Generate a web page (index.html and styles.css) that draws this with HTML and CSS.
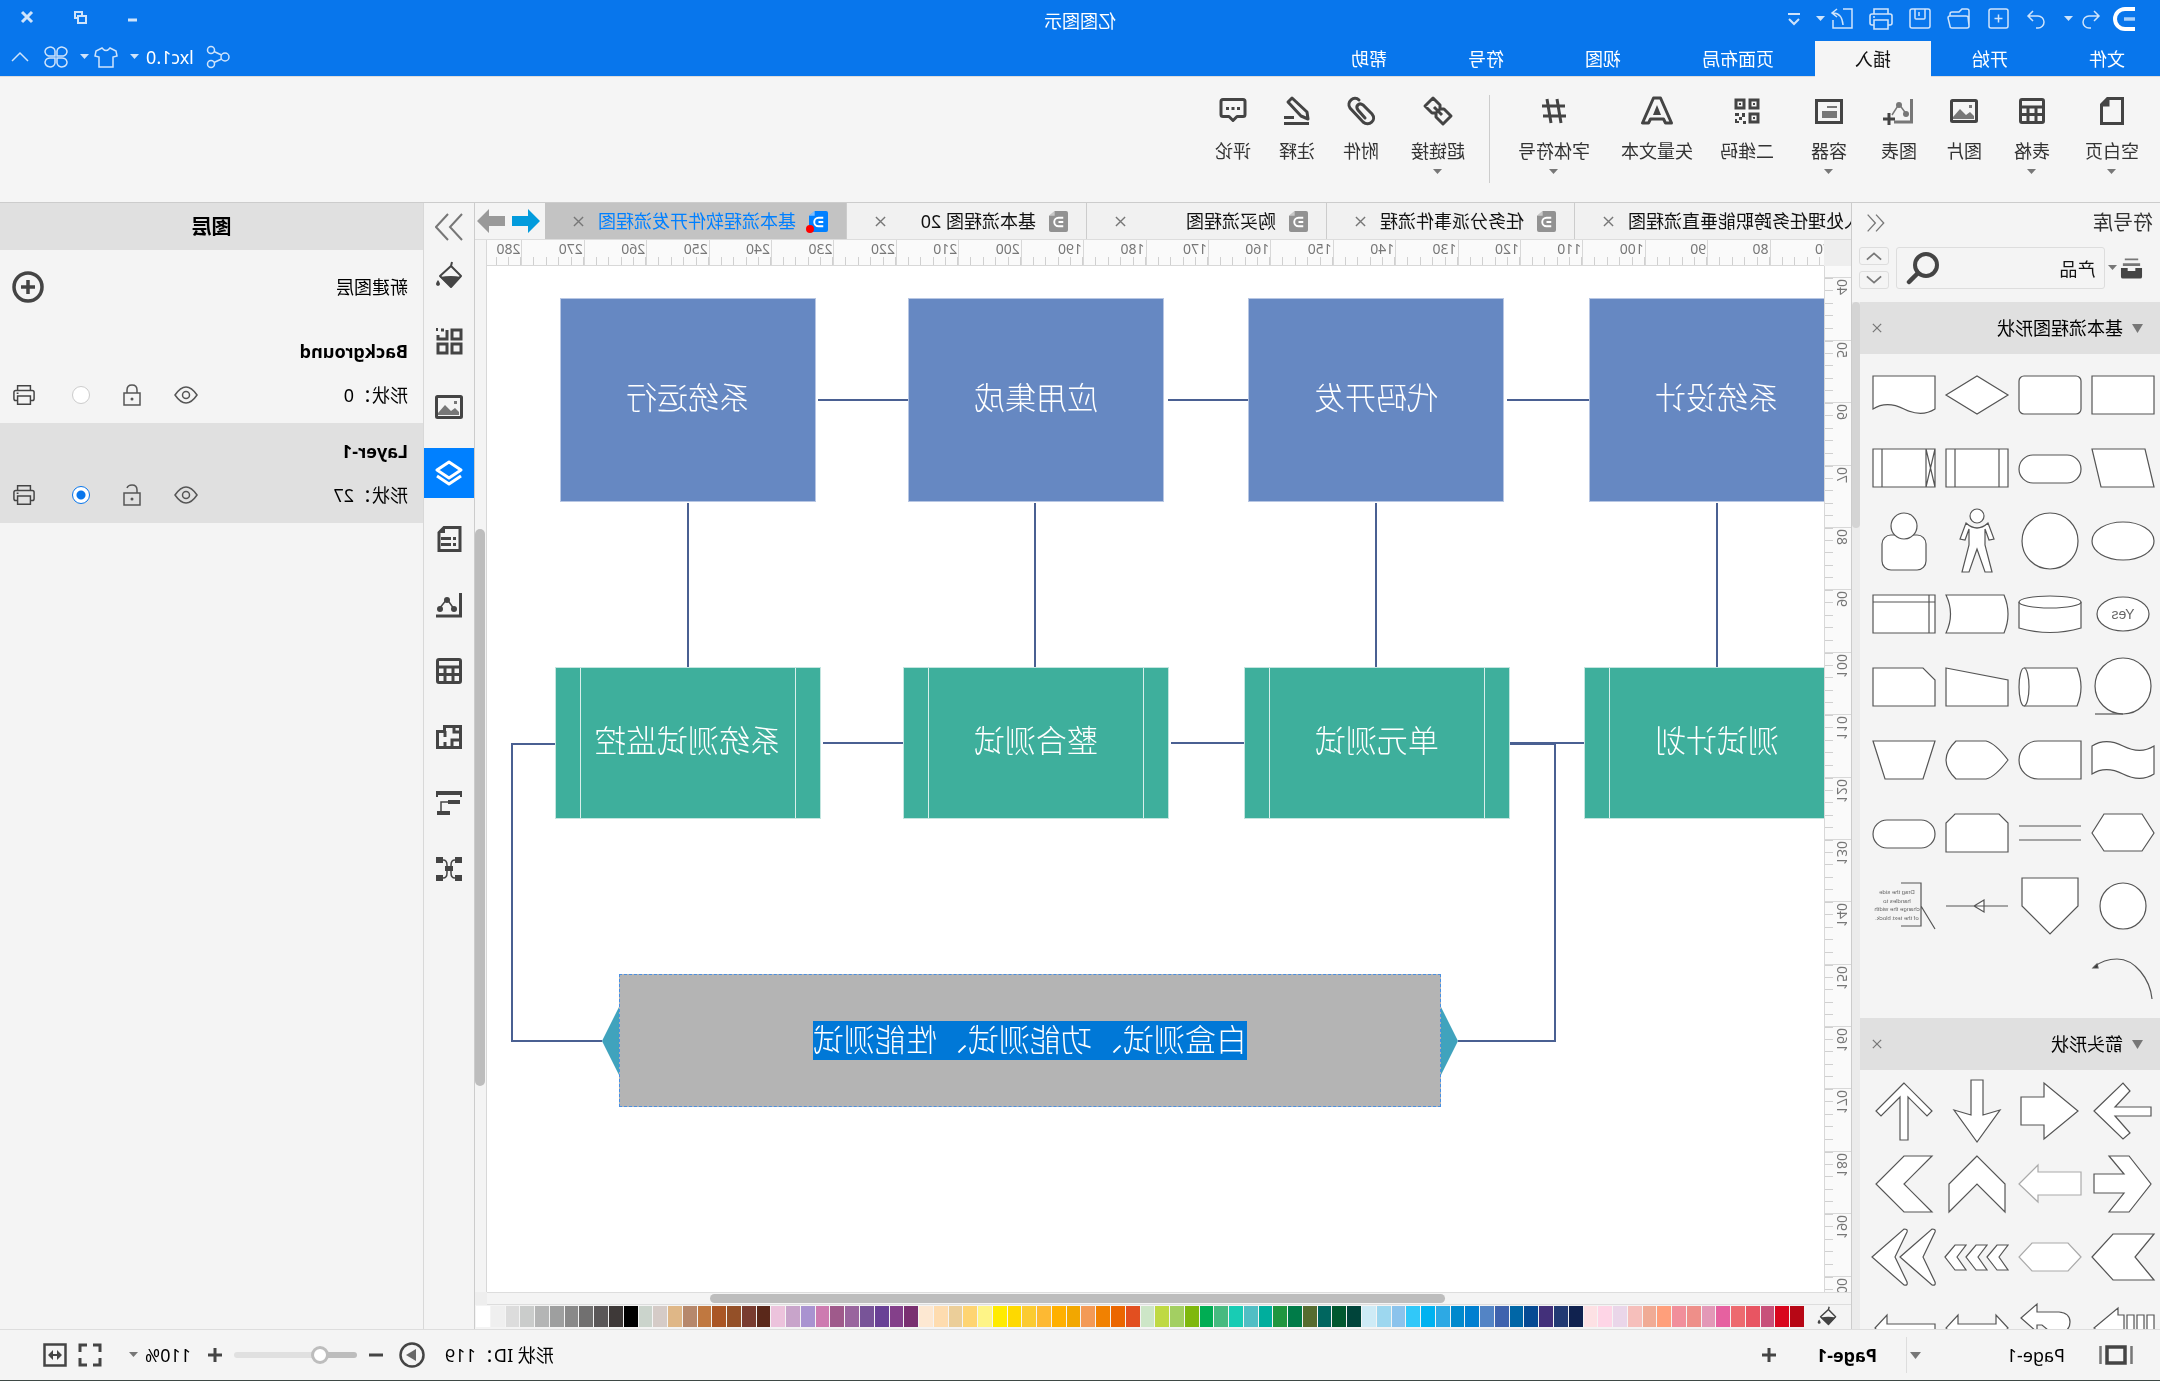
FILE: index.html
```html
<!DOCTYPE html>
<html lang="zh-CN">
<head>
<meta charset="utf-8">
<title>亿图图示</title>
<link rel="stylesheet" href="styles.css">
</head>
<body>
<svg class="sprite" aria-hidden="true">
  <symbol id="i-bucket" viewBox="0 0 28 28"><path d="M11 1l1 4M12 5l11 10-11 11L2 15z" fill="none" stroke="currentColor" stroke-width="2" stroke-linejoin="round"/><path d="M2 16q10-2 21 0L12 26z" fill="currentColor"/><path d="M25 19q4 5 0 6-4-1 0-6z" fill="currentColor"/></symbol>
  <symbol id="i-image" viewBox="0 0 28 28"><rect x="1.500" y="3.500" width="25" height="21" rx="1" fill="none" stroke="currentColor" stroke-width="3"/><path d="M4 22v-3l4-4 4 3 6-6 7 8v2z" fill="#777" stroke="none"/><rect x="6" y="8" width="3" height="3" fill="#777" stroke="none"/></symbol>
  <symbol id="i-table" viewBox="0 0 28 28"><rect x="2.500" y="2.500" width="23" height="23" rx="1.500" fill="none" stroke="currentColor" stroke-width="3"/><path d="M2 10h24M2 17.500h24M10 10v15M18 10v15" stroke="currentColor" stroke-width="3"/></symbol>
  <symbol id="i-doc" viewBox="0 0 20 22"><path d="M0 2q0-2 2-2h12l6 5v15q0 2-2 2H2q-2 0-2-2z" fill="currentColor"/><path d="M14 0l6 5h-6z" fill="#fff" opacity=".5"/><path d="M5 7h5a4.500 4.500 0 0 1 0 9H5M5 11.500h5" fill="none" stroke="#fff" stroke-width="2"/></symbol>
  <symbol id="i-print" viewBox="0 0 24 24"><path d="M5 7V2h14v5M5 18H3q-2 0-2-2V9q0-2 2-2h18q2 0 2 2v7q0 2-2 2h-2M5 13h14v9H5zM18 10h2" fill="none" stroke="currentColor" stroke-width="1.600"/></symbol>
  <symbol id="i-eye" viewBox="0 0 24 18"><path d="M1 9q11-16 22 0-11 16-22 0z" fill="none" stroke="currentColor" stroke-width="1.500"/><circle cx="12" cy="9" r="3.500" fill="none" stroke="currentColor" stroke-width="1.500"/></symbol>
  <symbol id="i-x" viewBox="0 0 12 12"><path d="M1 1l10 10M11 1L1 11" stroke="currentColor" stroke-width="1.500"/></symbol>
  <symbol id="i-caret" viewBox="0 0 9 6"><path d="M0 0h9L4.500 5z" fill="currentColor"/></symbol>
  <symbol id="i-chevrons" viewBox="0 0 28 28"><path d="M14 1L2 14l12 13M27 1L15 14l12 13" fill="none" stroke="currentColor" stroke-width="2"/></symbol>
</svg>

<div class="app">
  <header class="header">
    <div class="titlebar">
      <div class="quick">
        <svg class="logo" viewBox="0 0 24 26"><path d="M1 3h10a10 10 0 0 1 0 20H1" fill="none" stroke="#fff" stroke-width="4"/><path d="M1 13h11" stroke="#a8d0fa" stroke-width="3.500"/></svg>
        <div class="pair">
          <button class="ib" aria-label="撤销"><svg viewBox="0 0 24 24"><path d="M8 4L3 9l5 5M3 9h10a6 6 0 0 1 0 12h-2"/></svg></button>
          <svg class="caret"><use href="#i-caret"/></svg>
        </div>
        <button class="ib" aria-label="恢复"><svg viewBox="0 0 24 24"><path d="M16 4l5 5-5 5M21 9H11a6 6 0 0 0 0 12h2"/></svg></button>
        <button class="ib" aria-label="新建"><svg viewBox="0 0 24 24"><rect x="2" y="2" width="19" height="19" rx="2"/><path d="M11.500 7.500v8M7.500 11.500h8"/></svg></button>
        <button class="ib" aria-label="打开"><svg viewBox="0 0 24 24"><path d="M2 20V4q0-2 2-2h5l3 3h7q2 0 2 2v2M2 19L3 10q0-1 2-1h16q2 0 2 2l-2 8q0 2-2 2H4q-2 0-2-2"/></svg></button>
        <button class="ib" aria-label="保存"><svg viewBox="0 0 24 24"><rect x="2" y="2" width="20" height="19" rx="2"/><path d="M7 2v9q0 1 1 1h8q1 0 1-1V2M13 5v4"/></svg></button>
        <button class="ib" aria-label="打印"><svg viewBox="0 0 24 24"><use href="#i-print"/></svg></button>
        <div class="pair">
          <button class="ib" aria-label="导出"><svg viewBox="0 0 24 24"><path d="M11 2H2v19h19v-8M17 2l5 4-5 4M21 6q-9 0-10 12"/></svg></button>
          <svg class="caret"><use href="#i-caret"/></svg>
        </div>
        <button class="ib narrow" aria-label="自定义"><svg viewBox="0 0 14 24"><path d="M1 7h12" stroke-width="2"/><path d="M2 12l5 5 5-5" stroke-width="2"/></svg></button>
      </div>
      <h1 class="app-title">亿图图示</h1>
      <div class="window">
        <button class="ib" aria-label="最小化"><svg viewBox="0 0 24 24"><path d="M8 15h9" stroke-width="3"/></svg></button>
        <button class="ib" aria-label="还原"><svg viewBox="0 0 24 24"><path d="M6 11h8v7H6z" stroke-width="2"/><path d="M10 10V7h7v6h-3" stroke-width="2"/></svg></button>
        <button class="ib" aria-label="关闭"><svg viewBox="0 0 24 24"><path d="M7 7l10 10M17 7L7 17" stroke-width="3"/></svg></button>
      </div>
    </div>
    <div class="menubar">
      <nav class="menu">
        <a href="#file">文件</a><a href="#home">开始</a><a href="#insert" class="active">插入</a><a href="#layout">页面布局</a><a href="#view">视图</a><a href="#symbol">符号</a><a href="#help">帮助</a>
      </nav>
      <div class="account">
        <button class="ib" aria-label="分享"><svg viewBox="0 0 24 24"><circle cx="5" cy="12" r="4"/><circle cx="19" cy="5" r="3.500"/><circle cx="19" cy="19" r="3.500"/><path d="M8.500 10L16 6.500M8.500 14l7.500 3.500"/></svg></button>
        <button class="user">lxc1.0<svg class="caret"><use href="#i-caret"/></svg></button>
        <div class="pair">
          <button class="ib" aria-label="主题"><svg viewBox="0 0 24 24"><path d="M8 3L2 6l-1 5 4 1v10h14V12l4-1-1-5-6-3q-4 5-8 0z"/></svg></button>
          <svg class="caret"><use href="#i-caret"/></svg>
        </div>
        <button class="ib" aria-label="应用"><svg viewBox="0 0 24 24"><path d="M11 11H7a5 4.500 0 1 1 4-5zM13 11h4a5 4.500 0 1 0-4-5zM11 13H7a5 4.500 0 1 0 4 5zM13 13h4a5 4.500 0 1 1-4 5z"/></svg></button>
        <button class="ib" aria-label="收起"><svg viewBox="0 0 24 24"><path d="M4 16l8-8 8 8"/></svg></button>
      </div>
    </div>
  </header>

  <div class="ribbon">
    <div class="group insert">
      <button class="tool"><svg viewBox="0 0 32 32"><path d="M5.500 3.500h15l6 6v19h-21z"/><path d="M20 3v7h7" fill="#444"/></svg>空白页<svg class="caret"><use href="#i-caret"/></svg></button>
      <button class="tool"><svg viewBox="-2 -2 32 32"><use href="#i-table" width="28" height="28"/></svg>表格<svg class="caret"><use href="#i-caret"/></svg></button>
      <button class="tool"><svg viewBox="-2 -2 32 32"><use href="#i-image" width="28" height="28"/></svg>图片</button>
      <button class="tool"><svg viewBox="0 0 32 32"><path d="M3.500 4v23H21" stroke="#777"/><path d="M8 20l8-11 7 11" stroke="#777" stroke-width="1.500"/><g fill="#777" stroke="none"><circle cx="9" cy="19" r="3"/><circle cx="16" cy="10" r="3"/></g><path d="M26 18v12M20 24h12"/></svg>图表</button>
      <button class="tool"><svg viewBox="0 0 32 32"><path d="M3.500 5.500h25v22h-25z"/><path d="M8 16h15v7H8zM8 11h10v2H8z" fill="#777" stroke="none"/></svg>容器<svg class="caret"><use href="#i-caret"/></svg></button>
      <button class="tool"><svg viewBox="0 0 32 32"><path d="M5 5h8v8H5zM19 5h8v8h-8zM5 19h8v8H5z"/><path d="M8 8h2v2H8zM22 8h2v2h-2zM8 22h2v2H8zM18 18h3v4h-3zM24 18h4v3h-4zM21 22h3v3h-3zM26 24h2v4h-4v-2h2zM17 26h3v3h-3z" fill="#444" stroke="none"/></svg>二维码</button>
      <button class="tool"><svg viewBox="0 0 32 32"><path d="M12.500 3h7l11 25h-6l-2-4h-13l-2 4h-6z" stroke-linejoin="round"/><path d="M16 10l4 10h-8z" fill="#444" stroke="none"/></svg>矢量文本</button>
      <button class="tool"><svg viewBox="0 0 32 32"><path d="M5 11h23M4 21h23M13 4l-4 24M23 4l-4 24"/></svg>字体符号<svg class="caret"><use href="#i-caret"/></svg></button>
    </div>
    <div class="group link">
      <button class="tool"><svg viewBox="0 0 32 32"><path d="M14 10l7-7 8 8-7 7h-4l-4-4zM18 22l-7 7-8-8 7-7h4l4 4z" stroke-linejoin="round"/><path d="M12 20l8-8"/></svg>超链接<svg class="caret"><use href="#i-caret"/></svg></button>
      <button class="tool"><svg viewBox="0 0 32 32"><path d="M18 5c5-5 13 2 9 8L14 27c-6 5-14-2-9-8l9-9c4-3 8 1 5 5l-7 8" stroke-linecap="round"/></svg>附件</button>
      <button class="tool"><svg viewBox="0 0 32 32"><path d="M4 28.500h25M19 22.500h10M6 17L21 3l4 4-13 14-7 3z" stroke-linejoin="round"/></svg>注释</button>
      <button class="tool"><svg viewBox="0 0 32 32"><path d="M6 4.500h20q2 0 2 2v13q0 2-2 2h-6l-4 4-4-4H6q-2 0-2-2v-13q0-2 2-2z" stroke-linejoin="round"/><path d="M9 12h3v3H9zM14.500 12h3v3h-3zM20 12h3v3h-3z" fill="#444" stroke="none"/></svg>评论</button>
    </div>
  </div>

  <main class="main">
    <aside class="library">
      <div class="lib-head"><h2>符号库</h2><button class="collapse" aria-label="收起符号库"><svg><use href="#i-chevrons"/></svg></button></div>
      <div class="lib-search">
        <button class="lib-menu" aria-label="符号库菜单"><svg class="stack" viewBox="0 0 24 24"><path d="M5 2h14v2H5zM3 7h18v3H3z" fill="#777"/><path d="M1 12h7v3h8v-3h7v9q0 2-2 2H3q-2 0-2-2z" fill="#444"/></svg><svg class="caret"><use href="#i-caret"/></svg></button>
        <div class="search"><input type="text" value="产品" aria-label="搜索符号"><svg viewBox="0 0 34 34"><circle cx="14" cy="14" r="11" fill="none" stroke="#444" stroke-width="4"/><path d="M22 22l9 9" stroke="#444" stroke-width="4.500" stroke-linecap="round"/></svg></div>
        <div class="steps">
          <button aria-label="上一个"><svg viewBox="0 0 18 10"><path d="M1 9l8-7 8 7"/></svg></button>
          <button aria-label="下一个"><svg viewBox="0 0 18 10"><path d="M1 1l8 7 8-7"/></svg></button>
        </div>
      </div>
      <div class="lib-body">
        <div class="lib-list">
          <section>
            <h3 class="lib-title"><svg class="tri" viewBox="0 0 11 9"><path d="M0 0h11L5.500 9z" fill="#777"/></svg><span>基本流程图形状</span><button aria-label="关闭"><svg><use href="#i-x"/></svg></button></h3>
            <div class="shapes">
              <svg viewBox="-37 -37 73 73"><path d="M-31-19h62v38h-62z"/></svg>
              <svg viewBox="-37 -37 73 73"><rect x="-31" y="-19" width="62" height="38" rx="5"/></svg>
              <svg viewBox="-37 -37 73 73"><path d="M-31 0L0-19 31 0 0 19z"/></svg>
              <svg viewBox="-37 -37 73 73"><path d="M-31-19h62v33C20 7 10 9 0 14S-20 21-31 14z"/></svg>
              <svg viewBox="-37 -37 73 73"><path d="M-22-19h53l-9 38h-53z"/></svg>
              <svg viewBox="-37 -37 73 73"><rect x="-31" y="-13" width="62" height="28" rx="14"/></svg>
              <svg viewBox="-37 -37 73 73"><path d="M-31-19h62v38h-62zM-22-19v38M22-19v38"/></svg>
              <svg viewBox="-37 -37 73 73"><path d="M-31-19h62v38h-62zM-22-19v38M22-19v38M-31-19l9 38M-22-19l-9 38"/></svg>
              <svg viewBox="-37 -37 73 73"><ellipse rx="31" ry="19"/></svg>
              <svg viewBox="-37 -37 73 73"><circle r="28"/></svg>
              <svg viewBox="-37 -37 73 73"><path d="M-11-18Q0-8 11-18l6 16-5 1-4-11V4l7 27H8L0 8l-8 23h-7L-8 4v-16l-4 11-5-1z"/><circle cy="-25" r="7"/></svg>
              <svg viewBox="-37 -37 73 73"><rect x="-22" y="-6" width="44" height="35" rx="9"/><circle cy="-15" r="13"/></svg>
              <svg viewBox="-37 -37 73 73"><ellipse rx="26" ry="17"/><text x="0" y="5" class="yes">Yes</text></svg>
              <svg viewBox="-37 -37 73 73"><path d="M-31-12V14Q0 23 31 14V-12"/><ellipse cy="-12" rx="31" ry="6"/></svg>
              <svg viewBox="-37 -37 73 73"><path d="M-27-19h58q-9 19 0 38h-58q-8-19 0-38z"/></svg>
              <svg viewBox="-37 -37 73 73"><path d="M-31-19h62v38h-62zM-31-12h62M-25-19v38"/></svg>
              <svg viewBox="-37 -37 73 73"><circle cy="-1" r="28"/><path d="M0 27h28"/></svg>
              <svg viewBox="-37 -37 73 73"><path d="M26-19h-53q-8 19 0 38h53"/><ellipse cx="26" rx="5" ry="19"/></svg>
              <svg viewBox="-37 -37 73 73"><path d="M31-19L-31-7v26h62z"/></svg>
              <svg viewBox="-37 -37 73 73"><path d="M31-19h-50L-31-7v26h62z"/></svg>
              <svg viewBox="-37 -37 73 73"><path d="M-31-14C-20-7-10-9 0-14S20-21 31-14V14C20 7 10 9 0 14S-20 21-31 14z"/></svg>
              <svg viewBox="-37 -37 73 73"><path d="M-31-19h43a19 19 0 0 1 0 38h-43z"/></svg>
              <svg viewBox="-37 -37 73 73"><path d="M-31 0Q-18-17-9-19h30q20 19 0 38H-9Q-18 17-31 0z"/></svg>
              <svg viewBox="-37 -37 73 73"><path d="M-31-19h62L19 19h-38z"/></svg>
              <svg viewBox="-37 -37 73 73"><path d="M-31 0l12-19h38L31 0 19 18h-38z"/></svg>
              <svg viewBox="-37 -37 73 73"><path d="M-31-7h62M-31 7h62"/></svg>
              <svg viewBox="-37 -37 73 73"><path d="M-22-19h44l9 9v29h-62v-29z"/></svg>
              <svg viewBox="-37 -37 73 73"><rect x="-31" y="-13" width="62" height="28" rx="14"/></svg>
              <svg viewBox="-37 -37 73 73"><circle r="23"/></svg>
              <svg viewBox="-37 -37 73 73"><path d="M-28-28h56V0L0 28-28 0z"/></svg>
              <svg viewBox="-37 -37 73 73"><path d="M-31 0h62M-7-6L3 0-7 6z"/></svg>
              <svg viewBox="-37 -37 73 73"><path d="M3-23h-20v43H3M-17 0l-14 23" fill="none"/><g class="note"><text x="7" y="-12">Drag the side</text><text x="7" y="-3">handles to</text><text x="7" y="5">change the width</text><text x="7" y="14">of the text block.</text></g></svg>
              <svg viewBox="-37 -37 73 73"><path d="M-29 20C-27 0-12-20 6-20 15-20 23-17 29-12" fill="none"/><path d="M25-11l1-4 4 4z" fill="#333"/></svg>
            </div>
          </section>
          <section>
            <h3 class="lib-title"><svg class="tri" viewBox="0 0 11 9"><path d="M0 0h11L5.500 9z" fill="#777"/></svg><span>箭头形状</span><button aria-label="关闭"><svg><use href="#i-x"/></svg></button></h3>
            <div class="shapes">
              <svg viewBox="-37 -37 73 73"><path d="M29 0L0-28l-7 8L8-4h-36v9H8L-7 22l7 6z"/></svg>
              <svg viewBox="-37 -37 73 73"><path d="M29-14H6v-14L-28 0 6 28V14h23z"/></svg>
              <svg viewBox="-37 -37 73 73"><path d="M-6-31H6V4l17-5L0 31-23-1-6 4z"/></svg>
              <svg viewBox="-37 -37 73 73"><path d="M0-28L28 0l-5 5L4-14v43h-8v-43L-23 5l-5-5z"/></svg>
              <svg viewBox="-37 -37 73 73"><path d="M29-10H-1l15-18H-6L-28 0-6 28h20L-1 9h30z"/></svg>
              <svg viewBox="-37 -37 73 73"><path d="M31 0L12-19v7h-43v23h43v7z" class="soft"/></svg>
              <svg viewBox="-37 -37 73 73"><path d="M0-28L28 0v28L0 0l-28 28V0z"/></svg>
              <svg viewBox="-37 -37 73 73"><path d="M0-28h-28L0 0l-28 28H0L28 0z"/></svg>
              <svg viewBox="-37 -37 73 73"><path d="M31 0L10-23h-41L-12 0l-19 23h41z"/></svg>
              <svg viewBox="-37 -37 73 73"><path d="M-31 0l13-14h36L31 0 18 14h-36z" class="soft"/></svg>
              <svg viewBox="-37 -37 73 73"><path d="M32 0L22-12H11L20 0l-9 13h11zM11 0L1-12h-11L-1 0l-9 13H1zM-10 0l-10-12h-11l9 12-9 13h11z"/></svg>
              <svg viewBox="-37 -37 73 73"><path d="M32 0L0-28q-4 0-3 3L9 0-3 25q-1 4 3 3zM4 0l-32-28q-4 0-3 3l12 25-12 25q-1 4 3 3z"/></svg>
              <svg viewBox="-37 -37 73 73"><path d="M29-2L5-22v7H-1v36H5V18zM-4-15h-7v36h7zM-14-15h-7v36h7zM-24-15h-7v36h7z"/></svg>
              <svg viewBox="-37 -37 73 73"><path d="M29-12L13-26v8h-22q-11 1-11 10t10 11v7L8-5H13V2z"/></svg>
              <svg viewBox="-37 -37 73 73"><path d="M-31-2l12-13v9h38v-9L31-2 19 11V2h-38v9z"/></svg>
              <svg viewBox="-37 -37 73 73"><path d="M29-2L17-15v9h-48v9h48v9z"/></svg>
            </div>
          </section>
        </div>
        <div class="lib-scroll"><span></span></div>
      </div>
    </aside>

    <section class="center">
      <div class="doc-tabs">
        <div class="doc-tab first"><span>人处理任务跨职能垂直流程图</span><button aria-label="关闭"><svg><use href="#i-x"/></svg></button></div>
        <div class="doc-tab"><svg class="doc"><use href="#i-doc"/></svg><span>任务分派事件流程</span><button aria-label="关闭"><svg><use href="#i-x"/></svg></button></div>
        <div class="doc-tab"><svg class="doc"><use href="#i-doc"/></svg><span>购买流程图</span><button aria-label="关闭"><svg><use href="#i-x"/></svg></button></div>
        <div class="doc-tab"><svg class="doc"><use href="#i-doc"/></svg><span>基本流程图 20</span><button aria-label="关闭"><svg><use href="#i-x"/></svg></button></div>
        <div class="doc-tab active"><svg class="doc"><use href="#i-doc"/></svg><i class="dirty"></i><span>基本流程软件开发流程图</span><button aria-label="关闭"><svg><use href="#i-x"/></svg></button></div>
        <div class="doc-nav">
          <button aria-label="向左"><svg viewBox="0 0 28 24"><path d="M0 12L12 0v7h16v10H12v7z" fill="#029bdc"/></svg></button>
          <button aria-label="向右"><svg viewBox="0 0 28 24"><path d="M28 12L16 0v7H0v10h16v7z" fill="#999"/></svg></button>
        </div>
      </div>
      <div class="workspace">
        <div class="corner"></div>
        <div class="ruler-x"><div class="marks" id="marks-x"></div></div>
        <div class="v-scroll"><span></span></div>
        <div class="ruler-y"><div class="marks" id="marks-y"></div></div>
        <div class="canvas">
          <svg class="wires"><g>
            <path d="M235 134h82M576 134h80M916 134h90M107 237v165M448 237v165M789 237v165M1136 237v165M239 477h76M579 477h74M921 477h80"/>
            <path d="M315 478h-46v297h97M1269 478h43v297h-90"/></g>
            <path d="M383 741v68l-17-34zM1205 741v68l17-34z" class="tip"/>
          </svg>
          <div class="node step" style="left:-21px">系统设计</div>
          <div class="node step" style="left:320px">代码开发</div>
          <div class="node step" style="left:660px">应用集成</div>
          <div class="node step" style="left:1008px">系统运行</div>
          <div class="node test" style="left:-26px">测试计划</div>
          <div class="node test" style="left:314px">单元测试</div>
          <div class="node test" style="left:655px">整合测试</div>
          <div class="node test" style="left:1003px">系统测试监控</div>
          <div class="node editing"><mark>白盒测试、功能测试、性能测试</mark></div>
        </div>
        <div class="corner-b"></div>
        <div class="h-scroll"><span></span></div>
        <div class="corner-c"></div>
      </div>
      <div class="palette"><svg><use href="#i-bucket"/></svg><div class="swatches" id="swatches"></div></div>
    </section>

    <aside class="strip">
      <button class="collapse" aria-label="收起面板"><svg viewBox="0 0 28 28"><path d="M1 1l12 13L1 27M15 1l12 13-12 13" fill="none" stroke="#777" stroke-width="2"/></svg></button>
      <div class="strip-tools">
        <button aria-label="填充"><svg><use href="#i-bucket"/></svg></button>
        <button aria-label="符号"><svg viewBox="0 0 28 28"><path d="M2 3h9v9H2zM2 17h9v9H2zM16 17h9v9h-9zM16 3v9h9V8M19 3h3" fill="none" stroke="currentColor" stroke-width="3"/><path d="M25 1h2v3h-2z" fill="currentColor"/></svg></button>
        <button aria-label="图片"><svg><use href="#i-image"/></svg></button>
        <button class="active" aria-label="图层"><svg viewBox="0 0 28 28"><path d="M14 3l12 8-12 8-12-8zM2 17l12 8 12-8" fill="none" stroke="currentColor" stroke-width="3" stroke-linejoin="round"/></svg></button>
        <button aria-label="注释"><svg viewBox="0 0 28 28"><path d="M3 2.500h16l5 5v18H3z" fill="none" stroke="currentColor" stroke-width="3"/><path d="M18 2v6h7zM12 12h10v3H12zM12 18h10v3H12zM7 12h3v3H7zM7 18h3v3H7z" fill="currentColor"/></svg></button>
        <button aria-label="图表"><svg viewBox="0 0 28 28"><path d="M2.500 2v23H27" fill="none" stroke="currentColor" stroke-width="3"/><path d="M9 18l7-10 8 10" fill="none" stroke="currentColor" stroke-width="1.500"/><g fill="currentColor"><circle cx="9" cy="18" r="3"/><circle cx="16" cy="9" r="3"/><circle cx="23" cy="18" r="3"/></g></svg></button>
        <button aria-label="表格"><svg><use href="#i-table"/></svg></button>
        <button aria-label="平面图"><svg viewBox="0 0 28 28"><path d="M2.500 3.500h16v5h7v16h-23zM9 3v6H2M11 24v-7H2M18 8v6M18 19v5" fill="none" stroke="currentColor" stroke-width="3"/></svg></button>
        <button aria-label="甘特图"><svg viewBox="0 0 28 28"><path d="M1 2h26v6h-2V6H3v2H1zM3 11h12v4H3zM13 22h13v4H13z" fill="currentColor"/><path d="M15 13h7v9" fill="none" stroke="currentColor" stroke-width="1.500"/></svg></button>
        <button aria-label="思维导图"><svg viewBox="0 0 28 28"><path d="M8 5q4 0 4 5v8q0 5-4 5M20 5q-4 0-4 5v8q0 5 4 5" fill="none" stroke="currentColor" stroke-width="1.500"/><path d="M1 2h7v6H1zM20 2h7v6h-7zM1 20h7v6H1zM20 20h7v6h-7zM10 11h8v5h-8z" fill="currentColor"/></svg></button>
      </div>
    </aside>

    <aside class="layers">
      <h2>图层</h2>
      <div class="new-layer"><span>新建图层</span><button aria-label="新建图层"><svg viewBox="0 0 32 32"><circle cx="16" cy="16" r="14" fill="none" stroke="#444" stroke-width="3.500"/><path d="M16 9v14M9 16h14" stroke="#444" stroke-width="3.500"/></svg></button></div>
      <div class="layer">
        <h3>Background</h3>
        <div class="layer-row"><span>形状：0</span>
          <button aria-label="可见"><svg class="eye"><use href="#i-eye"/></svg></button>
          <button aria-label="锁定"><svg class="lock" viewBox="0 0 18 22"><path d="M1 9h16v12H1zM4 9V6q0-5 5-5t5 5v3" fill="none" stroke="#555" stroke-width="1.500"/><circle cx="9" cy="15" r="1.500" fill="#555"/></svg></button>
          <input type="radio" name="layer" aria-label="Background">
          <button aria-label="打印"><svg class="print"><use href="#i-print"/></svg></button>
        </div>
      </div>
      <div class="layer selected">
        <h3>Layer-1</h3>
        <div class="layer-row"><span>形状：27</span>
          <button aria-label="可见"><svg class="eye"><use href="#i-eye"/></svg></button>
          <button aria-label="锁定"><svg class="lock" viewBox="0 0 18 22"><path d="M1 9h16v12H1zM4 9V6q0-5 5-5 4 0 5 3" fill="none" stroke="#555" stroke-width="1.500"/><circle cx="9" cy="15" r="1.500" fill="#555"/></svg></button>
          <input type="radio" name="layer" aria-label="Layer-1" checked>
          <button aria-label="打印"><svg class="print"><use href="#i-print"/></svg></button>
        </div>
      </div>
    </aside>
  </main>

  <footer class="status">
    <div class="pages">
      <button class="view" aria-label="页面视图"><svg viewBox="0 0 34 20"><path d="M1.500 1v18M32.500 1v18" stroke="#777" stroke-width="2.500"/><path d="M8 2h18v16H8z" fill="none" stroke="#444" stroke-width="3.500"/></svg></button>
      <label class="page-select"><select aria-label="页面"><option>Page-1</option></select><svg class="tri" viewBox="0 0 11 9"><path d="M0 1h11L5.500 8z" fill="#777"/></svg></label>
      <a href="#page-1" class="page">Page-1</a>
      <button class="add" aria-label="添加页面"><svg viewBox="0 0 16 16"><path d="M8 1v14M1 8h14"/></svg></button>
    </div>
    <div class="zoom">
      <span class="shape-id">形状 ID：119</span>
      <button aria-label="放映"><svg class="play" viewBox="0 0 26 26"><circle cx="13" cy="13" r="11.500" fill="none" stroke="#444" stroke-width="2.500"/><path d="M9 7l10 6-10 6z" fill="#666"/></svg></button>
      <button aria-label="缩小"><svg class="pm" viewBox="0 0 16 16"><path d="M1 8h14"/></svg></button>
      <input type="range" min="0" max="100" value="27" aria-label="缩放">
      <button aria-label="放大"><svg class="pm" viewBox="0 0 16 16"><path d="M8 1v14M1 8h14"/></svg></button>
      <label class="zoom-select"><select aria-label="缩放比例"><option>110%</option></select><svg class="caret"><use href="#i-caret"/></svg></label>
      <button aria-label="全屏"><svg class="fit" viewBox="0 0 24 24"><path d="M2 9V2h7M15 2h7v7M22 15v7h-7M9 22H2v-7" fill="none" stroke="#444" stroke-width="3"/></svg></button>
      <button aria-label="适合宽度"><svg class="fit" viewBox="0 0 24 24"><path d="M1.500 1.500h21v21h-21z" fill="none" stroke="#444" stroke-width="2.500"/><path d="M8 12h8" stroke="#444" stroke-width="2"/><path d="M5 12l5-5v10zM19 12l-5-5v10z" fill="#444"/></svg></button>
    </div>
  </footer>
</div>
<script src="app.js"></script>
</body>
</html>
```
FILE: app.js
```js
function addMarks(id, from, to) {
  const box = document.getElementById(id);
  for (let value = from; value <= to; value += 10) {
    const mark = document.createElement('div');
    const label = document.createElement('span');
    mark.className = 'mark';
    label.textContent = value;
    mark.append(label);
    box.append(mark);
  }
}
addMarks('marks-x', 70, 280);
addMarks('marks-y', 30, 200);

const colors = ('b70715 d9061d c8517a e85562 ed6a6f e661a0 e398b7 ee8f89 f18f9b ff9f7b f0ab95 f6bfbb ead6e9 fed5e6 fde1e4 ' +
  '10224f 223a73 43307a 064a93 0066a6 3f63ae 5384c5 007fd0 0089cd 2da9e4 00b2f0 31c8f9 8bc3ec 9dd7ef ceebf6 ' +
  '00443a 00582f 00665f 566c30 007b48 1f963f 00ae9d 51bec4 18ccb4 47ba80 00ad53 7fb80e a3cf62 bfd943 cde6c7 ' +
  'e24f20 eb6600 f18101 f39a56 f2a700 ffb000 fdb933 fbcb31 fed900 ffeb00 fef487 fed472 ebce99 fedcaf fde8d2 ' +
  '7a3071 84408a 694196 785498 99659e 9f5a8b cd7bb0 a993d0 c8a4ca ecc3dc ' +
  '5a281a 793c30 945028 aa5625 c07840 b6886c dfb787 d5cbc7 cbd4cc ' +
  '000000 3e3938 5a5758 717070 898989 9e9f9f b4b5b5 cacccb dcdcdc efefef ffffff').split(' ');
const swatches = document.getElementById('swatches');
for (const color of colors) {
  const button = document.createElement('button');
  button.style.background = '#' + color;
  button.setAttribute('aria-label', '#' + color);
  swatches.append(button);
}
```
FILE: styles.css
```css
* { box-sizing: border-box; }
body { margin: 0; overflow: hidden; background: #f4f4f4; }
.app {
  height: 100vh;
  display: flex;
  flex-direction: column;
  transform: scaleX(-1);
  font: 18px/24px "Noto Sans", "Noto Sans CJK SC", sans-serif;
  color: #111;
}
.sprite { position: absolute; width: 0; height: 0; }
button, input, select { font: inherit; color: inherit; margin: 0; padding: 0; border: 0; background: none; }
button { display: flex; align-items: center; justify-content: center; }
h1, h2, h3 { margin: 0; font: inherit; }
a { color: inherit; text-decoration: none; }
svg { display: block; flex: none; }
.caret { width: 9px; height: 6px; color: #777; }

/* Header */
.header { background: #0876ec; color: #fff; height: 76px; flex: none; }
.header .caret { color: #cfe4fb; }
.titlebar { display: grid; grid-template-columns: 1fr auto 1fr; align-items: center; height: 41px; }
.quick { display: flex; align-items: center; gap: 15px; padding: 0 0 4px 24px; }
.logo { width: 24px; height: 26px; margin-right: -5px; }
.pair { display: flex; align-items: center; gap: 5px; }
.ib { width: 24px; height: 24px; color: #cfe4fb; }
.ib.narrow { width: 14px; }
.ib svg { width: 100%; height: 24px; fill: none; stroke: #cfe4fb; stroke-width: 1.5; }
.window { display: flex; justify-content: flex-end; gap: 29px; padding: 0 15px 8px 0; }
.menubar { display: flex; justify-content: space-between; height: 35px; }
.menu { display: flex; gap: 1px; margin-left: -5px; }
.menu a { padding: 0 40px; line-height: 37px; height: 36px; }
.menu a.active { background: #f5f5f5; color: #111; position: relative; z-index: 1; }
.account { display: flex; align-items: center; gap: 12px; padding: 0 8px 4px 0; }
.user { gap: 7px; }

/* Ribbon */
.ribbon { display: flex; flex: none; height: 127px; background: #f5f5f5; border-top: 1px solid #ddd; border-bottom: 1px solid #ccc; padding-top: 18px; color: #333; }
.group { display: grid; height: 88px; }
.insert { grid-template-columns: 96px 64px 72px 58px 82px 82px 98px 118px; border-right: 1px solid #ccc; }
.insert .tool:last-child { padding-right: 10px; }
.link { grid-template-columns: 102px 52px 76px 52px; }
.tool { flex-direction: column; justify-content: flex-start; white-space: nowrap; line-height: 24px; }
.tool > svg:first-child { width: 32px; height: 32px; fill: none; stroke: #444; stroke-width: 3; color: #444; margin-bottom: 12px; }
.tool .caret { margin-top: 6px; }

/* Main columns */
.main { flex: 1; min-height: 0; display: grid; grid-template-columns: 309px minmax(0, 1fr) 51px 424px; background: #f4f4f4; }

/* Symbol library */
.library { display: flex; flex-direction: column; min-height: 0; border-right: 1px solid #ccc; }
.lib-head { display: flex; justify-content: space-between; align-items: center; height: 44px; padding: 0 15px 4px 7px; }
.lib-head h2 { font-size: 20px; color: #333; }
.lib-head svg { width: 18px; height: 18px; color: #777; }
.lib-search { display: flex; justify-content: space-between; height: 42px; padding: 0 7px 0 17px; margin-bottom: 13px; }
.lib-menu { gap: 3px; }
.stack { width: 23px; height: 24px; }
.search { display: flex; align-items: center; width: 209px; margin-right: 5px; border: 1px solid #ddd; border-radius: 3px; padding: 0 9px; }
.search input { flex: 1; min-width: 0; height: 30px; }
.search svg { width: 34px; height: 34px; }
.steps { display: flex; flex-direction: column; justify-content: space-between; }
.steps button { width: 30px; height: 18px; border: 1px solid #ddd; border-radius: 3px; }
.steps svg { width: 16px; height: 10px; fill: none; stroke: #777; stroke-width: 2; }
.lib-body { flex: 1; min-height: 0; display: grid; grid-template-columns: 1fr 8px; }
.lib-list { overflow: hidden; }
.lib-title { display: flex; align-items: center; height: 52px; background: #e0e0e0; padding: 0 12px 0 17px; color: #000; }
.lib-title span { flex: 1; padding-left: 9px; }
.lib-title button svg { width: 10px; height: 10px; color: #777; overflow: visible; }
.tri { width: 11px; height: 9px; }
.shapes { display: grid; grid-template-columns: repeat(4, 73px); grid-auto-rows: 73px; padding: 4px 0 3px; }
.shapes svg { width: 73px; height: 73px; fill: #fff; stroke: #555; stroke-width: 1.2; overflow: visible; }
.shapes .soft { stroke: #aaa; }
.shapes text { stroke: none; fill: #666; text-anchor: middle; font-family: "Liberation Sans", sans-serif; }
.shapes .yes { font-size: 14px; }
.shapes .note { font-size: 6px; }
.lib-scroll { background: #ebebeb; }
.lib-scroll span { display: block; height: 22%; border-radius: 4px; background: #d4d4d4; }

/* Document area */
.center { display: flex; flex-direction: column; min-width: 0; min-height: 0; }
.doc-tabs { display: flex; height: 37px; border-bottom: 1px solid #ddd; overflow: hidden; }
.doc-tab { position: relative; display: flex; flex: none; align-items: center; min-width: 240px; padding: 0 28px 0 18px; background: #f1f1f1; border-right: 1px solid #ccc; white-space: nowrap; }
.doc-tab.first { margin-left: -29px; }
.doc-tab span { flex: 1; }
.doc-tab button { margin-left: 14px; }
.doc-tab button svg { width: 11px; height: 11px; color: #777; overflow: visible; }
.doc-tab .doc { width: 19px; height: 21px; margin-right: 13px; color: #929292; }
.doc-tab.active { background: #c3c3c3; color: #0080ff; border-right: 0; }
.doc-tab.active .doc { color: #0080ff; }
.dirty { position: absolute; left: 32px; top: 22px; width: 8px; height: 8px; border-radius: 50%; background: #f00; }
.doc-nav { display: flex; gap: 7px; padding: 0 5px; }
.doc-nav svg { width: 28px; height: 24px; }

.workspace { flex: 1; min-height: 0; display: grid; grid-template: 26px minmax(0, 1fr) 13px / 27px minmax(0, 1fr) 12px; }
.corner, .corner-c { background: #eee; }
.ruler-x, .ruler-y { overflow: hidden; display: flex; background: #fafafa; font-size: 14px; line-height: 18px; color: #777; }
.ruler-x { border-bottom: 1px solid #d8d8d8; }
.ruler-y { border-right: 1px solid #d8d8d8; }
.marks { display: flex; flex: 1; }
.mark { flex: 1 1 0; min-width: 0; min-height: 0; }
.ruler-x .marks { margin: 0 -27px 0 -9px; }
.ruler-x .mark { border-left: 1px solid #d8d8d8; padding-left: 1px; background: repeating-linear-gradient(to right, #d0d0d0 0 1px, transparent 1px 20%) left bottom / 100% 8px no-repeat; }
.ruler-x .mark span { display: block; line-height: 17px; }
.ruler-y .marks { flex-direction: column; margin: -51px 0 -46px; }
.ruler-y .mark { border-top: 1px solid #d8d8d8; padding-top: 1px; background: repeating-linear-gradient(to bottom, #d0d0d0 0 1px, transparent 1px 20%) right top / 8px 100% no-repeat; }
.ruler-y .mark span { display: block; width: 18px; writing-mode: vertical-rl; transform: rotate(180deg); }
.v-scroll { grid-row: 1 / 3; grid-column: 3; border-left: 1px solid #d8d8d8; background: #f4f4f4; padding: 289px 0 0 1px; }
.v-scroll span { display: block; width: 10px; height: 73%; border-radius: 5px; background: #bdbdbd; }
.h-scroll { border: solid #ddd; border-width: 1px 0; padding: 1px 0 0; }
.h-scroll span { display: block; width: 55%; height: 9px; margin-left: 379px; border-radius: 5px; background: #bdbdbd; }
.corner-b { border: solid #ddd; border-width: 1px 0; }

.canvas { position: relative; overflow: hidden; background: #fff; }
.wires { position: absolute; width: 100%; height: 100%; fill: none; stroke: #4a6092; stroke-width: 2; }
.wires .tip { fill: #40a3bd; stroke: none; }
.node { position: absolute; display: flex; align-items: center; justify-content: center; white-space: nowrap; color: #fff; font: 300 31px/39px "Noto Sans CJK SC", sans-serif; }
.step { top: 32px; width: 256px; height: 204px; padding-bottom: 10px; background: #6688c2; border: 1px solid #b7c6e3; }
.test { top: 401px; width: 266px; height: 152px; padding-bottom: 10px; border: 1px solid #c3e5df; background: linear-gradient(#d8efeb, #d8efeb) 24px 0 / 1px 100% no-repeat, linear-gradient(#d8efeb, #d8efeb) 239px 0 / 1px 100% no-repeat, #3eaf9c; }
.editing { left: 383px; top: 708px; width: 822px; height: 133px; background: #b4b4b4; border: 1px dashed #4a90e2; }
.editing mark { display: block; height: 39px; line-height: 33px; background: #0078d7; color: #fff; }

.palette { display: flex; align-items: center; height: 24px; flex: none; padding: 0 1px 2px 14px; }
.palette > svg { width: 20px; height: 20px; color: #444; }
.swatches { flex: 1; display: flex; gap: 1px; height: 21px; margin-left: 13px; }
.swatches button { flex: 1 1 0; min-width: 0; }

/* Side tool strip */
.strip { border-left: 1px solid #ccc; }
.strip button { width: 50px; height: 50px; color: #444; }
.strip svg { width: 28px; height: 28px; }
.strip .collapse { height: 47px; }
.strip-tools { display: flex; flex-direction: column; gap: 16px; }
.strip-tools .active { background: #0080ff; color: #fff; }

/* Layers */
.layers { border-left: 1px solid #d8d8d8; color: #000; }
.layers h2 { height: 47px; background: #e0e0e0; text-align: center; font-size: 20px; line-height: 48px; font-weight: 700; }
.new-layer { display: flex; align-items: center; justify-content: space-between; height: 73px; padding: 0 12px 0 15px; }
.new-layer svg { width: 32px; height: 32px; }
.layer { height: 100px; padding: 16px 13px 0 15px; }
.layer.selected { background: #e0e0e0; }
.layer h3 { font-weight: 700; }
.layer-row { display: flex; align-items: center; gap: 33px; height: 24px; margin-top: 20px; }
.layer-row span { flex: 1; }
.eye { width: 24px; height: 18px; color: #555; }
.lock { width: 18px; height: 22px; }
.print { width: 22px; height: 22px; color: #444; }
.layer-row input { appearance: none; width: 18px; height: 18px; margin-right: 4px; border: 1px solid #ccc; border-radius: 50%; background: #fff; }
.layer-row input:checked { border: 1px solid #0876ec; background: radial-gradient(#0876ec 0 4px, #fff 5px); }

/* Status bar */
.status { display: flex; justify-content: space-between; align-items: stretch; flex: none; height: 52px; background: #f4f4f4; border-top: 1px solid #ddd; border-bottom: 1px solid #3e4945; color: #000; }
.pages, .zoom { display: flex; align-items: center; }
.status select { appearance: none; }
.view { margin-left: 27px; }
.view svg { width: 34px; height: 20px; }
.page-select { display: flex; align-items: center; justify-content: space-between; width: 193px; height: 36px; padding: 0 3px 0 34px; border-right: 1px solid #ddd; }
.page { margin-left: 29px; font-weight: 700; }
.add { margin-left: 40px; }
.add svg, .pm { width: 16px; height: 16px; stroke: #444; stroke-width: 3; }
.zoom { padding-right: 43px; gap: 11px; }
.shape-id { margin-right: 9px; }
.play { width: 26px; height: 26px; margin-right: 4px; }
.zoom input { appearance: none; width: 123px; height: 6px; border-radius: 3px; background: linear-gradient(to right, #bdbdbd 27%, #e0e0e0 27%); }
.zoom input::-webkit-slider-thumb { appearance: none; width: 18px; height: 18px; border: 3px solid #bdbdbd; border-radius: 50%; background: #fff; }
.zoom-select { display: flex; align-items: center; gap: 7px; margin: 0 16px 0 5px; }
.fit { width: 24px; height: 24px; }
```
